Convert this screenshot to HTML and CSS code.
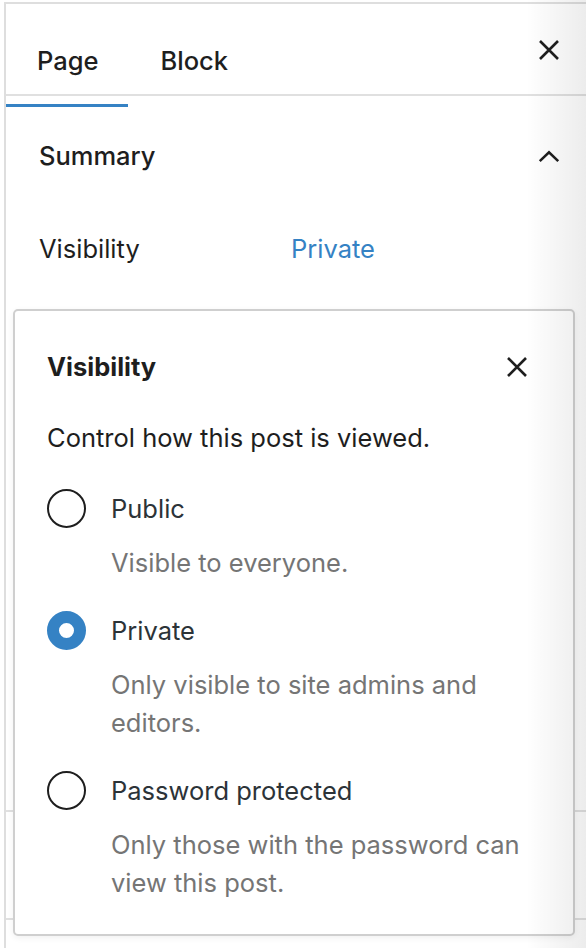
FILE: index.html
```html
<!DOCTYPE html>
<html lang="en">
<head>
<meta charset="utf-8">
<title>Visibility</title>
<link rel="stylesheet" href="styles.css">
</head>
<body>
<div class="sidebar">
  <div class="tabs">
    <div class="tab-list">
      <span class="tab active">Page</span>
      <span class="tab">Block</span>
    </div>
    <button class="icon-btn close-top" aria-label="Close">
      <svg width="24" height="24" viewBox="0 0 24 24"><path d="M3 3 L21 21 M21 3 L3 21" stroke="#1e1e1e" stroke-width="2.6" fill="none"/></svg>
    </button>
  </div>
  <div class="indicator-row"><div class="indicator"></div></div>

  <div class="panel">
    <div class="panel-head">
      <span class="panel-title">Summary</span>
      <svg class="chevron" width="26" height="16" viewBox="0 0 26 16"><path d="M3 13 L13 3.5 L23 13" stroke="#1e1e1e" stroke-width="2.8" fill="none"/></svg>
    </div>
    <div class="row">
      <span class="row-label">Visibility</span>
      <span class="row-value">Private</span>
    </div>
  </div>
  <div class="panel-spacer"></div>
  <div class="panel-line one"></div>
  <div class="panel-line two"></div>

  <div class="popover">
    <div class="pop-head">
      <span class="pop-title">Visibility</span>
      <svg class="pop-close" width="24" height="24" viewBox="0 0 24 24"><path d="M3 3 L21 21 M21 3 L3 21" stroke="#1e1e1e" stroke-width="2.6" fill="none"/></svg>
    </div>
    <p class="pop-intro">Control how this post is viewed.</p>
    <div class="options">
      <div class="option">
        <div class="opt-main"><span class="radio"></span><span class="opt-label">Public</span></div>
        <p class="opt-desc">Visible to everyone.</p>
      </div>
      <div class="option">
        <div class="opt-main"><span class="radio checked"></span><span class="opt-label">Private</span></div>
        <p class="opt-desc">Only visible to site admins and editors.</p>
      </div>
      <div class="option">
        <div class="opt-main"><span class="radio"></span><span class="opt-label">Password protected</span></div>
        <p class="opt-desc">Only those with the password can view this post.</p>
      </div>
    </div>
  </div>
  <div class="edge-shade"></div>
</div>
</body>
</html>
```

FILE: styles.css
```css
* { box-sizing: border-box; }
html, body { margin: 0; padding: 0; background: #fff; }
body {
  font-family: Inter, "Noto Sans", "Liberation Sans", sans-serif;
  color: #1e1e1e;
  font-size: 25.5px;
  line-height: 38px;
  width: 586px;
  height: 948px;
  overflow: hidden;
  position: relative;
}
.sidebar {
  margin: 2px 0 0 4px;
  border-top: 2px solid #dedede;
  border-left: 2px solid #dedede;
  height: 946px;
  display: flex;
  flex-direction: column;
}
.tabs {
  display: flex;
  justify-content: space-between;
  align-items: flex-start;
  height: 92px;
  border-bottom: 2px solid #e0e0e0;
}
.tab-list { display: flex; padding-top: 38px; padding-left: 31px; gap: 62px; }
.tab { font-weight: 500; color: #1e1e1e; }
.icon-btn { border: 0; background: none; padding: 0; margin: 30px 21px 0 0; width: 32px; height: 32px; display: flex; align-items: center; justify-content: center; }
.close-top svg { width: 24px; height: 24px; }
.indicator-row { height: 12px; padding-top: 8px; }
.indicator { width: 122px; height: 3px; background: #3582c4; }
.panel { padding: 0 26px 0 33px; }
.panel-head {
  display: flex; justify-content: space-between; align-items: center;
  margin-top: 29px;
}
.panel-title { font-weight: 500; }
.chevron { width: 24px; height: 15px; margin-right: -1px; }
.row { display: flex; margin-top: 55px; }
.row-label { width: 252px; }
.row-value { color: #3582c4; }
.panel-spacer { flex: 0 0 542px; }
.panel-line { height: 2px; background: #e0e0e0; }
.panel-line.two { margin-top: 106px; }
.popover {
  position: absolute;
  left: 13px;
  top: 309px;
  width: 562px;
  height: 627px;
  background: #fff;
  border: 2px solid #cfcfcf;
  border-radius: 5px;
  box-shadow: 0 2px 6px rgba(0,0,0,0.06);
  padding: 37px 32px 0 32px;
}
.pop-head { display: flex; justify-content: space-between; align-items: center; }
.pop-title { font-weight: 700; }
.pop-close { width: 24px; height: 24px; margin-right: 12px; }
.pop-intro { margin: 33px 0 0; }
.options { display: flex; flex-direction: column; gap: 29px; margin-top: 32px; }
.opt-main { display: flex; align-items: center; }
.radio {
  width: 39px; height: 39px; border-radius: 50%;
  border: 2px solid #1e1e1e;
  flex: none;
  margin-right: 25px;
}
.radio.checked {
  border: 12px solid #3582c4;
  background: #fff;
}
.opt-label { color: #2c3338; }
.opt-desc { margin: 16px 0 0 64px; color: #757575; }
.edge-shade {
  position: absolute;
  top: 0; right: 0;
  width: 60px; height: 948px;
  background: linear-gradient(to right, rgba(0,0,0,0), rgba(0,0,0,0.075));
  pointer-events: none;
}
```
